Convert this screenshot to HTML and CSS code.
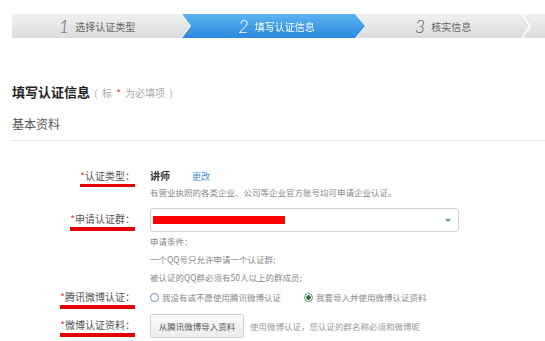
FILE: index.html
```html
<!DOCTYPE html>
<html lang="zh-CN">
<head>
    <meta charset="UTF-8">
    <meta name="viewport" content="width=device-width, initial-scale=1.0">
    <title>填写认证信息</title>
    <link rel="stylesheet" href="styles.css">
</head>
<body>

    <!-- Steps -->
    <div class="steps">
        <div class="step step-done"><span class="num">1</span>选择认证类型</div>
        <div class="step-active-wrap">
            <div class="step step-active"><span class="num">2</span>填写认证信息</div>
        </div>
        <div class="step step-next"><span class="num">3</span>核实信息</div>
        <svg class="step-sep" width="10" height="24" viewBox="0 0 10 24">
            <polyline points="1,0 9,12 1,24" fill="none" stroke="#fff" stroke-width="1.5"/>
        </svg>
    </div>

    <!-- Title -->
    <h2 class="title">填写认证信息<span class="note"> ( 标 <span class="star">*</span> 为必填项 )</span></h2>
    <div class="section">基本资料</div>

    <!-- Form -->
    <div class="form">
        <div class="row row-type">
            <div class="label"><span class="mark"><span class="star">*</span>认证类型：</span></div>
            <div class="field">
                <div class="type-line"><b class="type-name">讲师</b><a class="change" href="#">更改</a></div>
                <div class="hint">有营业执照的各类企业、公司等企业官方账号均可申请企业认证。</div>
            </div>
        </div>

        <div class="row row-group">
            <div class="label"><span class="mark"><span class="star">*</span>申请认证群：</span></div>
            <div class="field">
                <div class="select">
                    <div class="redact"></div>
                    <span class="caret"></span>
                </div>
                <div class="cond">
                    <p>申请条件：</p>
                    <p>一个QQ号只允许申请一个认证群;</p>
                    <p>被认证的QQ群必须有50人以上的群成员;</p>
                </div>
            </div>
        </div>

        <div class="row row-weibo">
            <div class="label"><span class="mark"><span class="star">*</span>腾讯微博认证：</span></div>
            <div class="field">
                <label class="radio"><span class="dot"></span>我没有或不愿使用腾讯微博认证</label>
                <label class="radio checked"><span class="dot"></span>我要导入并使用微博认证资料</label>
            </div>
        </div>

        <div class="row row-import">
            <div class="label"><span class="mark"><span class="star">*</span>微博认证资料：</span></div>
            <div class="field">
                <button class="btn">从腾讯微博导入资料</button>
                <span class="hint-inline">使用微博认证，您认证的群名称必须和微博昵</span>
            </div>
        </div>
    </div>

</body>
</html>
```

FILE: styles.css
```css
/* Basic Reset */
* {
    margin: 0;
    padding: 0;
    box-sizing: border-box;
}

body {
    font-family: "Noto Sans CJK SC", "Noto Sans", sans-serif;
    background-color: #fff;
    color: #333;
    padding-left: 12px;
    overflow: hidden;
}

/* Steps bar */
.steps {
    display: flex;
    height: 24px;
    margin-top: 14px;
    background: linear-gradient(#f0f0f0, #dcdcdc);
}

.step {
    display: flex;
    align-items: center;
    justify-content: center;
    height: 24px;
    font-size: 10px;
    color: #666;
}

.step-done {
    width: 170px;
}

.step-active-wrap {
    filter: drop-shadow(1px 0 0 #fff) drop-shadow(-1px 0 0 #fff);
}

.step-active {
    width: 183px;
    color: #fff;
    padding-left: 6px;
    background: linear-gradient(#5cb4f0, #2a88df);
    clip-path: polygon(0 0, 173px 0, 183px 50%, 173px 100%, 0 100%, 9px 50%);
}

.step-next {
    width: 156px;
}

.step-sep {
    display: block;
}

.num {
    font-family: Lato, "Open Sans", sans-serif;
    font-style: italic;
    font-weight: 300;
    font-size: 18px;
    margin-right: 6px;
}

/* Title */
.title {
    margin-top: 45px;
    font-size: 13px;
    font-weight: bold;
    color: #222;
    line-height: 18px;
}

.title .note {
    font-size: 10px;
    font-weight: normal;
    color: #aaa;
    word-spacing: 2px;
}

.star {
    color: #e33;
}

.section {
    margin-top: 14px;
    font-size: 12px;
    line-height: 16px;
    color: #555;
    padding-bottom: 8px;
    border-bottom: 1px solid #e8e8e8;
}

/* Form */
.form {
    margin-top: 27px;
}

.row {
    display: grid;
    grid-template-columns: 123px 1fr;
    column-gap: 15px;
}

.label {
    text-align: right;
    font-size: 10px;
    color: #555;
    line-height: 16px;
}

.mark {
    display: inline-block;
    line-height: 14px;
    padding-bottom: 1px;
    border-bottom: 4px solid #e60000;
}

.row-type .mark {
    border-bottom-width: 3px;
}

.field {
    font-size: 9px;
    white-space: nowrap;
}

.type-line {
    line-height: 16px;
}

.type-name {
    font-size: 10px;
    color: #333;
}

.change {
    margin-left: 22px;
    color: #3b8fd9;
    text-decoration: none;
}

.hint {
    font-size: 8.5px;
    line-height: 14px;
    color: #888;
}

.row-group {
    margin-top: 9px;
}

.row-group .label {
    line-height: 22px;
}

.select {
    display: flex;
    align-items: center;
    width: 309px;
    height: 24px;
    padding: 0 7px 0 2px;
    border: 1px solid #d4d4d4;
    border-radius: 3px;
    box-shadow: inset 0 1px 2px rgba(0, 0, 0, 0.05);
}

.redact {
    width: 132px;
    height: 8px;
    background-color: #f00;
}

.caret {
    margin-left: auto;
    border-top: 3px solid #5a8db8;
    border-left: 3px solid transparent;
    border-right: 3px solid transparent;
}

.cond {
    font-size: 8.5px;
    line-height: 18px;
    color: #888;
}

.row-weibo {
    margin-top: 2px;
}

.row-weibo .label,
.row-weibo .field {
    line-height: 18px;
}

.radio {
    display: inline-flex;
    align-items: center;
    color: #888;
    font-size: 8.5px;
}

.radio + .radio {
    margin-left: 21px;
}

.radio .dot {
    width: 9px;
    height: 9px;
    margin-right: 3px;
    border: 1px solid #6f8fb3;
    border-radius: 50%;
    background-color: #fff;
}

.radio.checked .dot {
    border-color: #5a9a6a;
    background: radial-gradient(circle, #2f6e3e 0 2px, #fff 2.5px);
}

.row-import {
    margin-top: 5px;
}

.row-import .label {
    line-height: 22px;
}

.row-import .field {
    display: flex;
    align-items: center;
}

.btn {
    width: 94px;
    height: 24px;
    padding: 0;
    font-family: inherit;
    font-size: 8.5px;
    color: #555;
    background: linear-gradient(#fafafa, #ececec);
    border: 1px solid #d2d2d2;
    border-radius: 2px;
}

.hint-inline {
    margin-left: 6px;
    font-size: 8.5px;
    color: #999;
}
```
